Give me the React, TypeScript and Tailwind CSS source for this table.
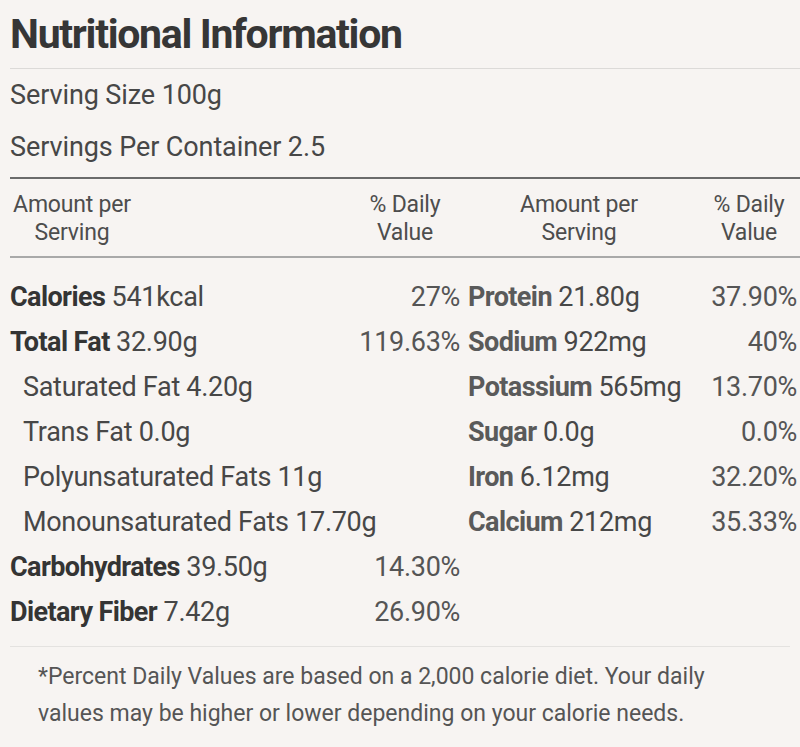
import React from "react";

type Row = { label: string; value: string; pct?: string; bold: boolean; indent?: boolean };

const left: Row[] = [
  { label: "Calories", value: "541kcal", pct: "27%", bold: true },
  { label: "Total Fat", value: "32.90g", pct: "119.63%", bold: true },
  { label: "Saturated Fat", value: "4.20g", bold: false, indent: true },
  { label: "Trans Fat", value: "0.0g", bold: false, indent: true },
  { label: "Polyunsaturated Fats", value: "11g", bold: false, indent: true },
  { label: "Monounsaturated Fats", value: "17.70g", bold: false, indent: true },
  { label: "Carbohydrates", value: "39.50g", pct: "14.30%", bold: true },
  { label: "Dietary Fiber", value: "7.42g", pct: "26.90%", bold: true },
];

const right: Row[] = [
  { label: "Protein", value: "21.80g", pct: "37.90%", bold: true },
  { label: "Sodium", value: "922mg", pct: "40%", bold: true },
  { label: "Potassium", value: "565mg", pct: "13.70%", bold: true },
  { label: "Sugar", value: "0.0g", pct: "0.0%", bold: true },
  { label: "Iron", value: "6.12mg", pct: "32.20%", bold: true },
  { label: "Calcium", value: "212mg", pct: "35.33%", bold: true },
];

function NutriRow({ r, side }: { r: Row; side: "l" | "r" }) {
  return (
    <div className="flex h-[45px] items-center justify-between whitespace-nowrap">
      <div className={r.indent ? "pl-[13px] text-[#474747]" : "text-[#474747]"}>
        {r.bold ? (
          <span className={side === "l" ? "font-bold tracking-[-0.6px] text-[#343434]" : "font-bold tracking-[-0.6px] text-[#5a5a5a]"}>
            {r.label}
          </span>
        ) : (
          <span>{r.label}</span>
        )}{" "}
        <span>{r.value}</span>
      </div>
      {r.pct ? <div className="text-[#555555]">{r.pct}</div> : null}
    </div>
  );
}

export default function App() {
  return (
    <div className="min-h-[747px] w-[800px] bg-[#f7f4f2] pl-[10px] font-['Roboto',sans-serif] text-[#474747]">
      <div className="flex h-[69px] items-center border-b border-[#dcdad8]">
        <h1 className="text-[41px] leading-none font-bold tracking-[-1.3px] text-[#363636]">Nutritional Information</h1>
      </div>
      <div className="flex h-[53px] items-center text-[27px] tracking-[-0.1px]">Serving Size 100g</div>
      <div className="flex h-[50px] items-center text-[27px] tracking-[-0.1px]">Servings Per Container 2.5</div>
      <div className="h-[7px] border-b-2 border-[#6b6b6b]" />
      <div className="grid grid-cols-[124px_216px_110px_238px_102px] border-b-2 border-[#a9a9a9] pt-[12px] pb-[9px] text-[23px] leading-[28px] tracking-[-0.2px] whitespace-nowrap text-[#4d4d4d]">
        <div className="text-center">
          Amount per
          <br />
          Serving
        </div>
        <div />
        <div className="text-center">
          % Daily
          <br />
          Value
        </div>
        <div className="text-center">
          Amount per
          <br />
          Serving
        </div>
        <div className="text-center">
          % Daily
          <br />
          Value
        </div>
      </div>
      <div className="grid grid-cols-[450px_1fr] gap-x-[8px] pt-[17px] pr-[3px] pb-[11px] text-[27px] tracking-[-0.3px]">
        <div className="flex flex-col">
          {left.map((r) => (
            <NutriRow key={r.label} r={r} side="l" />
          ))}
        </div>
        <div className="flex flex-col">
          {right.map((r) => (
            <NutriRow key={r.label} r={r} side="r" />
          ))}
        </div>
      </div>
      <div className="mr-[10px] border-t border-[#e4e2e0] pt-[11px] pl-[28px] text-[23px] leading-[37px] whitespace-nowrap text-[#555555]">
        *Percent Daily Values are based on a 2,000 calorie diet. Your daily
        <br />
        values may be higher or lower depending on your calorie needs.
      </div>
    </div>
  );
}
